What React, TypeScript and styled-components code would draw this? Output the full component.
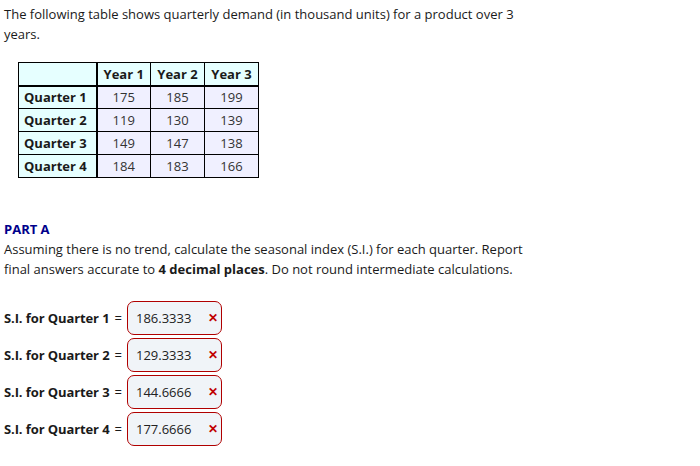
import React from "react";
import styled, { createGlobalStyle } from "styled-components";

const GlobalStyle = createGlobalStyle`
  body {
    margin: 0;
    background: #ffffff;
    font-family: "Open Sans", "Noto Sans", sans-serif;
    color: #1a1a1a;
  }
`;

const Page = styled.div`
  padding: 4px 4px 0 4px;
  width: 525px;
  font-size: 13px;
  line-height: 20px;
`;

const Para = styled.p`
  margin: 0;
`;

const DemandTable = styled.table`
  border-collapse: collapse;
  margin: 18px 0 0 14px;
  font-size: 13px;
  line-height: 20px;
`;

const HeadCell = styled.th<{ $corner?: boolean }>`
  box-sizing: border-box;
  height: 23px;
  background: #e6ffff;
  border: 1px solid #000;
  border-bottom: 2px solid #000;
  border-right: ${(p) => (p.$corner ? "2px" : "1px")} solid #000;
  font-weight: 700;
  padding: 0 3px;
  width: ${(p) => (p.$corner ? "78px" : "54px")};
  text-align: center;
`;

const RowHead = styled.th`
  box-sizing: border-box;
  height: 23px;
  background: #e6ffff;
  border: 1px solid #000;
  border-right: 2px solid #000;
  font-weight: 700;
  text-align: left;
  padding: 0 5px;
`;

const Cell = styled.td`
  background: #f0f0ff;
  border: 1px solid #000;
  text-align: center;
  padding: 0 4px;
  color: #333;
`;

const PartTitle = styled.div`
  margin-top: 41px;
  color: #00008b;
  font-weight: 700;
`;

const Answers = styled.div`
  margin-top: 22px;
  display: flex;
  flex-direction: column;
  gap: 3px;
`;

const AnswerRow = styled.div`
  display: flex;
  align-items: center;
  gap: 5px;
`;

const Label = styled.span`
  font-weight: 700;
  letter-spacing: -0.1px;
`;

const AnswerBox = styled.div`
  box-sizing: border-box;
  width: 95px;
  height: 34px;
  border: 1px solid #b00000;
  border-radius: 7px;
  background: #f0f4f8;
  display: flex;
  align-items: center;
  justify-content: space-between;
  padding: 0 3px 0 8px;
  color: #222;
`;

const Wrong = styled.span`
  color: #c00000;
  font-weight: 700;
  font-size: 12px;
`;

const years = ["Year 1", "Year 2", "Year 3"];
const rows = [
  { q: "Quarter 1", v: [175, 185, 199] },
  { q: "Quarter 2", v: [119, 130, 139] },
  { q: "Quarter 3", v: [149, 147, 138] },
  { q: "Quarter 4", v: [184, 183, 166] },
];

const answers = [
  { q: 1, value: "186.3333" },
  { q: 2, value: "129.3333" },
  { q: 3, value: "144.6666" },
  { q: 4, value: "177.6666" },
];

export default function App() {
  return (
    <>
      <GlobalStyle />
      <Page>
        <Para>
          The following table shows quarterly demand (in thousand units) for a
          product over 3 years.
        </Para>
        <DemandTable>
          <thead>
            <tr>
              <HeadCell $corner />
              {years.map((y) => (
                <HeadCell key={y}>{y}</HeadCell>
              ))}
            </tr>
          </thead>
          <tbody>
            {rows.map((r) => (
              <tr key={r.q}>
                <RowHead>{r.q}</RowHead>
                {r.v.map((n, i) => (
                  <Cell key={i}>{n}</Cell>
                ))}
              </tr>
            ))}
          </tbody>
        </DemandTable>
        <PartTitle>PART A</PartTitle>
        <Para>
          Assuming there is no trend, calculate the seasonal index (S.I.) for
          each quarter. Report final answers accurate to{" "}
          <b>4 decimal places</b>. Do not round intermediate calculations.
        </Para>
        <Answers>
          {answers.map((a) => (
            <AnswerRow key={a.q}>
              <Label>S.I. for Quarter {a.q}</Label>
              <span>=</span>
              <AnswerBox>
                <span>{a.value}</span>
                <Wrong>✕</Wrong>
              </AnswerBox>
            </AnswerRow>
          ))}
        </Answers>
      </Page>
    </>
  );
}
